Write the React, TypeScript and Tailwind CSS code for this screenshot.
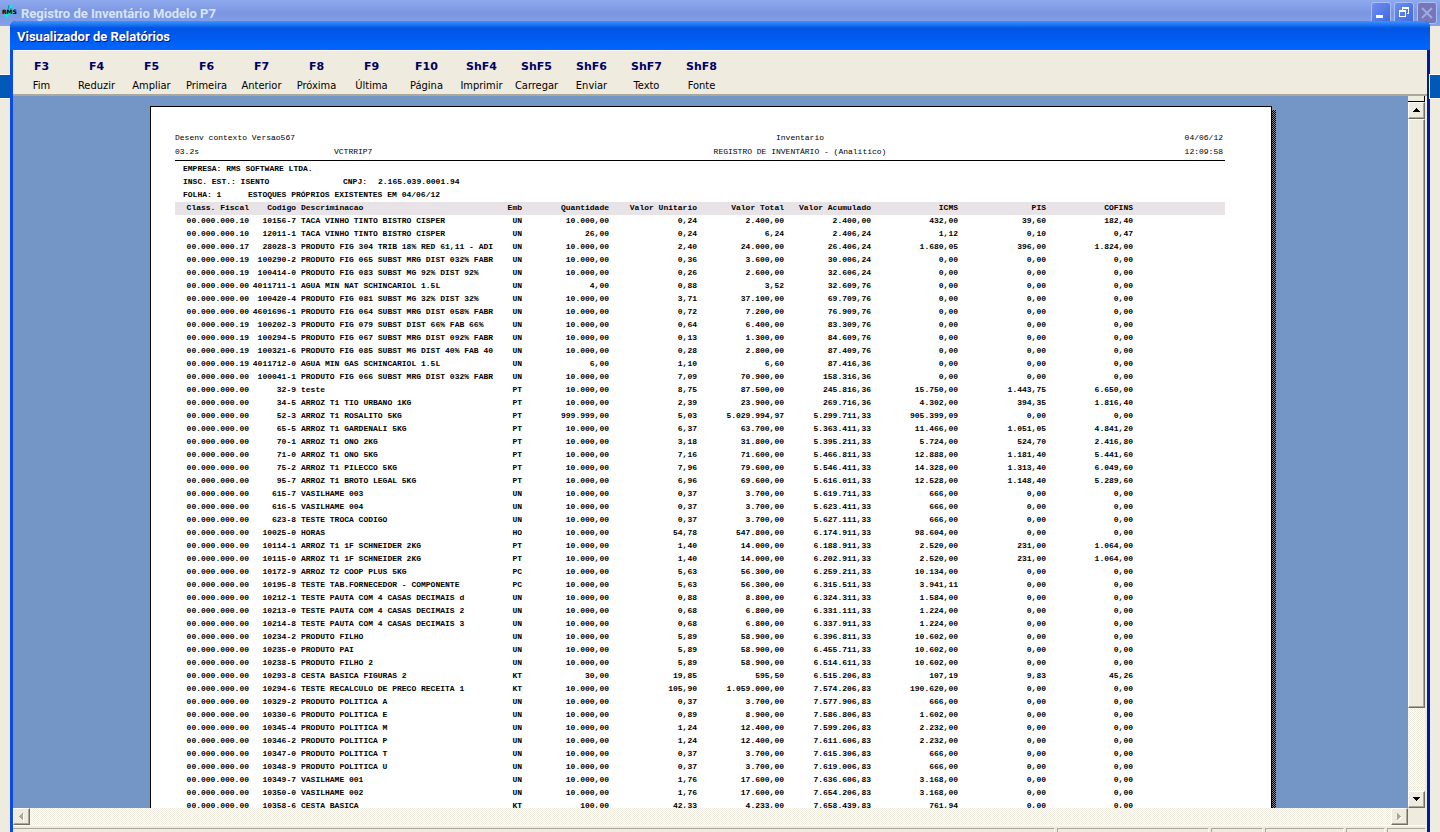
import clsx from "clsx";

const commands = [
  { key: "F3", label: "Fim" },
  { key: "F4", label: "Reduzir" },
  { key: "F5", label: "Ampliar" },
  { key: "F6", label: "Primeira" },
  { key: "F7", label: "Anterior" },
  { key: "F8", label: "Próxima" },
  { key: "F9", label: "Última" },
  { key: "F10", label: "Página" },
  { key: "ShF4", label: "Imprimir" },
  { key: "ShF5", label: "Carregar" },
  { key: "ShF6", label: "Enviar" },
  { key: "ShF7", label: "Texto" },
  { key: "ShF8", label: "Fonte" },
];

const columns = [
  "Class. Fiscal", "Codigo", "Descriminacao", "Emb", "Quantidade", "Valor Unitario",
  "Valor Total", "Valor Acumulado", "ICMS", "PIS", "COFINS",
];

// class | code | description | unit | qty | unit price | total | running total | icms | pis | cofins
const rows = `
00.000.000.10|10156-7|TACA VINHO TINTO BISTRO CISPER|UN|10.000,00|0,24|2.400,00|2.400,00|432,00|39,60|182,40
00.000.000.10|12011-1|TACA VINHO TINTO BISTRO CISPER|UN|26,00|0,24|6,24|2.406,24|1,12|0,10|0,47
00.000.000.17|28028-3|PRODUTO FIG 304 TRIB 18% RED 61,11 - ADI|UN|10.000,00|2,40|24.000,00|26.406,24|1.680,05|396,00|1.824,00
00.000.000.19|100290-2|PRODUTO FIG 065 SUBST MRG DIST 032% FABR|UN|10.000,00|0,36|3.600,00|30.006,24|0,00|0,00|0,00
00.000.000.19|100414-0|PRODUTO FIG 083 SUBST MG 92% DIST 92%|UN|10.000,00|0,26|2.600,00|32.606,24|0,00|0,00|0,00
00.000.000.00|4011711-1|AGUA MIN NAT SCHINCARIOL 1.5L|UN|4,00|0,88|3,52|32.609,76|0,00|0,00|0,00
00.000.000.00|100420-4|PRODUTO FIG 081 SUBST MG 32% DIST 32%|UN|10.000,00|3,71|37.100,00|69.709,76|0,00|0,00|0,00
00.000.000.00|4601696-1|PRODUTO FIG 064 SUBST MRG DIST 058% FABR|UN|10.000,00|0,72|7.200,00|76.909,76|0,00|0,00|0,00
00.000.000.19|100202-3|PRODUTO FIG 079 SUBST DIST 66% FAB 66%|UN|10.000,00|0,64|6.400,00|83.309,76|0,00|0,00|0,00
00.000.000.19|100294-5|PRODUTO FIG 067 SUBST MRG DIST 092% FABR|UN|10.000,00|0,13|1.300,00|84.609,76|0,00|0,00|0,00
00.000.000.19|100321-6|PRODUTO FIG 085 SUBST MG DIST 40% FAB 40|UN|10.000,00|0,28|2.800,00|87.409,76|0,00|0,00|0,00
00.000.000.19|4011712-0|AGUA MIN GAS SCHINCARIOL 1.5L|UN|6,00|1,10|6,60|87.416,36|0,00|0,00|0,00
00.000.000.00|100041-1|PRODUTO FIG 066 SUBST MRG DIST 032% FABR|UN|10.000,00|7,09|70.900,00|158.316,36|0,00|0,00|0,00
00.000.000.00|32-9|teste|PT|10.000,00|8,75|87.500,00|245.816,36|15.750,00|1.443,75|6.650,00
00.000.000.00|34-5|ARROZ T1 TIO URBANO 1KG|PT|10.000,00|2,39|23.900,00|269.716,36|4.302,00|394,35|1.816,40
00.000.000.00|52-3|ARROZ T1 ROSALITO 5KG|PT|999.999,00|5,03|5.029.994,97|5.299.711,33|905.399,09|0,00|0,00
00.000.000.00|65-5|ARROZ T1 GARDENALI 5KG|PT|10.000,00|6,37|63.700,00|5.363.411,33|11.466,00|1.051,05|4.841,20
00.000.000.00|70-1|ARROZ T1 ONO 2KG|PT|10.000,00|3,18|31.800,00|5.395.211,33|5.724,00|524,70|2.416,80
00.000.000.00|71-0|ARROZ T1 ONO 5KG|PT|10.000,00|7,16|71.600,00|5.466.811,33|12.888,00|1.181,40|5.441,60
00.000.000.00|75-2|ARROZ T1 PILECCO 5KG|PT|10.000,00|7,96|79.600,00|5.546.411,33|14.328,00|1.313,40|6.049,60
00.000.000.00|95-7|ARROZ T1 BROTO LEGAL 5KG|PT|10.000,00|6,96|69.600,00|5.616.011,33|12.528,00|1.148,40|5.289,60
00.000.000.00|615-7|VASILHAME 003|UN|10.000,00|0,37|3.700,00|5.619.711,33|666,00|0,00|0,00
00.000.000.00|616-5|VASILHAME 004|UN|10.000,00|0,37|3.700,00|5.623.411,33|666,00|0,00|0,00
00.000.000.00|623-8|TESTE TROCA CODIGO|UN|10.000,00|0,37|3.700,00|5.627.111,33|666,00|0,00|0,00
00.000.000.00|10025-0|HORAS|HO|10.000,00|54,78|547.800,00|6.174.911,33|98.604,00|0,00|0,00
00.000.000.00|10114-1|ARROZ T1 1F SCHNEIDER 2KG|PT|10.000,00|1,40|14.000,00|6.188.911,33|2.520,00|231,00|1.064,00
00.000.000.00|10115-0|ARROZ T1 1F SCHNEIDER 2KG|PT|10.000,00|1,40|14.000,00|6.202.911,33|2.520,00|231,00|1.064,00
00.000.000.00|10172-9|ARROZ T2 COOP PLUS 5KG|PC|10.000,00|5,63|56.300,00|6.259.211,33|10.134,00|0,00|0,00
00.000.000.00|10195-8|TESTE TAB.FORNECEDOR - COMPONENTE|PC|10.000,00|5,63|56.300,00|6.315.511,33|3.941,11|0,00|0,00
00.000.000.00|10212-1|TESTE PAUTA COM 4 CASAS DECIMAIS d|UN|10.000,00|0,88|8.800,00|6.324.311,33|1.584,00|0,00|0,00
00.000.000.00|10213-0|TESTE PAUTA COM 4 CASAS DECIMAIS 2|UN|10.000,00|0,68|6.800,00|6.331.111,33|1.224,00|0,00|0,00
00.000.000.00|10214-8|TESTE PAUTA COM 4 CASAS DECIMAIS 3|UN|10.000,00|0,68|6.800,00|6.337.911,33|1.224,00|0,00|0,00
00.000.000.00|10234-2|PRODUTO FILHO|UN|10.000,00|5,89|58.900,00|6.396.811,33|10.602,00|0,00|0,00
00.000.000.00|10235-0|PRODUTO PAI|UN|10.000,00|5,89|58.900,00|6.455.711,33|10.602,00|0,00|0,00
00.000.000.00|10238-5|PRODUTO FILHO 2|UN|10.000,00|5,89|58.900,00|6.514.611,33|10.602,00|0,00|0,00
00.000.000.00|10293-8|CESTA BASICA FIGURAS 2|KT|30,00|19,85|595,50|6.515.206,83|107,19|9,83|45,26
00.000.000.00|10294-6|TESTE RECALCULO DE PRECO RECEITA 1|KT|10.000,00|105,90|1.059.000,00|7.574.206,83|190.620,00|0,00|0,00
00.000.000.00|10329-2|PRODUTO POLITICA A|UN|10.000,00|0,37|3.700,00|7.577.906,83|666,00|0,00|0,00
00.000.000.00|10330-6|PRODUTO POLITICA E|UN|10.000,00|0,89|8.900,00|7.586.806,83|1.602,00|0,00|0,00
00.000.000.00|10345-4|PRODUTO POLITICA M|UN|10.000,00|1,24|12.400,00|7.599.206,83|2.232,00|0,00|0,00
00.000.000.00|10346-2|PRODUTO POLITICA P|UN|10.000,00|1,24|12.400,00|7.611.606,83|2.232,00|0,00|0,00
00.000.000.00|10347-0|PRODUTO POLITICA T|UN|10.000,00|0,37|3.700,00|7.615.306,83|666,00|0,00|0,00
00.000.000.00|10348-9|PRODUTO POLITICA U|UN|10.000,00|0,37|3.700,00|7.619.006,83|666,00|0,00|0,00
00.000.000.00|10349-7|VASILHAME 001|UN|10.000,00|1,76|17.600,00|7.636.606,83|3.168,00|0,00|0,00
00.000.000.00|10350-0|VASILHAME 002|UN|10.000,00|1,76|17.600,00|7.654.206,83|3.168,00|0,00|0,00
00.000.000.00|10358-6|CESTA BASICA|KT|100,00|42,33|4.233,00|7.658.439,83|761,94|0,00|0,00
`.trim().split("\n").map((line) => line.split("|"));

const bevel = "bg-[#efebde] border border-t-white border-l-white border-r-[#716f64] border-b-[#716f64] shadow-[inset_-1px_-1px_0_#aca899]";
const track = "bg-[repeating-conic-gradient(#ffffff_0_25%,#efebde_0_50%)] bg-[length:2px_2px]";

function ArrowButton({ dir, disabled }: { dir: "up" | "down" | "left" | "right"; disabled?: boolean }) {
  const paths = {
    up: "M3 0h1v1h1v1h1v1h1v1H0V3h1V2h1V1h1z",
    down: "M0 0h7v1H6v1H5v1H4v1H3V3H2V2H1V1H0z",
    left: "M0 3h1V2h1V1h1V0h1v7H3V6H2V5H1V4H0z",
    right: "M0 0h1v1h1v1h1v1h1v1H3v1H2v1H1v1H0z",
  };
  return (
    <button type="button" disabled={disabled} aria-label={dir} className={clsx("flex size-[17px] shrink-0 items-center justify-center", bevel)}>
      <svg width="9" height="9" viewBox="0 0 9 9" shapeRendering="crispEdges">
        <g transform={dir === "up" || dir === "down" ? "translate(1 2)" : "translate(2 1)"}>
          {disabled && <path d={paths[dir]} fill="#fff" transform="translate(1 1)" />}
          <path d={paths[dir]} fill={disabled ? "#aca899" : "#000"} />
        </g>
      </svg>
    </button>
  );
}

function MainTitleBar() {
  const btn = "h-[22px] w-5 rounded-[3px] border border-[#a9c0f5] flex justify-center";
  return (
    <header className="flex h-[26px] shrink-0 items-start bg-linear-to-b from-[#8fa9ee] via-[#7b96e0] to-[#84a2e8] pr-[3px] pl-[2px]">
      <svg width="16" height="16" viewBox="0 0 16 16" className="mt-[4px] shrink-0">
        <path d="M2 13l2-5 3-4 2-4 2 1-1 4 2 0-2 5-3 1-2 4-1-3z" fill="#14e4dc" />
        <path d="M7 1L6 6 4 9M9 4l-1 4" fill="none" stroke="#0a8f9a" />
        <text x="0" y="10" fontSize="6" fontWeight="bold" fontFamily="DejaVu Sans" fill="#000">RMS</text>
      </svg>
      <h1 className="ml-[3px] flex-1 pt-[5px] font-['Roboto','sans-serif'] text-[13px] leading-[18px] font-bold text-[#d8e4f8]">
        Registro de Inventário Modelo P7
      </h1>
      <div className="flex gap-[3px] pt-[2px]">
        <button type="button" aria-label="Minimizar" className={clsx(btn, "bg-linear-to-br from-[#6f8ff0] to-[#3f66dd]")}>
          <svg width="18" height="18" shapeRendering="crispEdges"><path d="M4 12h7v3H4z" fill="#fff" /></svg>
        </button>
        <button type="button" aria-label="Restaurar" className={clsx(btn, "bg-linear-to-br from-[#6f8ff0] to-[#3f66dd]")}>
          <svg width="18" height="18" shapeRendering="crispEdges" fill="#fff">
            <path fillRule="evenodd" d="M7 4h7v7h-2v-1h1V6H8v1H7zM4 7h7v7H4zM5 9v4h5V9z" />
          </svg>
        </button>
        <button type="button" aria-label="Fechar" disabled className={clsx(btn, "border-[#8f95cc] bg-[#7577b8]")}>
          <svg width="18" height="18" stroke="#a5a8e0" strokeWidth="2"><path d="M4 5l10 10M14 5L4 15" /></svg>
        </button>
      </div>
    </header>
  );
}

function Toolbar() {
  return (
    <nav className="flex h-[46px] shrink-0 border-t border-b-2 border-t-white border-b-[#aca899] bg-[#efebde] pl-px">
      {commands.map((c) => (
        <button key={c.key} type="button" className="flex w-[55px] shrink-0 flex-col items-center pt-2 whitespace-nowrap">
          <span className="font-['DejaVu_Sans','sans-serif'] text-[11px] leading-4 font-bold text-[#000063]">{c.key}</span>
          <span className="mt-[3px] font-['DejaVu_Sans_Condensed','sans-serif'] text-[11px] leading-4 text-black">{c.label}</span>
        </button>
      ))}
    </nav>
  );
}

function ReportTable() {
  return (
    <table className="w-full table-fixed border-collapse text-right font-bold whitespace-nowrap">
      <colgroup>
        <col className="w-[74px]" />
        <col className="w-[47px]" />
        <col className="w-[205px]" />
        <col className="w-[21px]" />
        <col className="w-[87px]" />
        <col className="w-[88px]" />
        <col className="w-[87px]" />
        <col className="w-[87px]" />
        <col className="w-[87px]" />
        <col className="w-[88px]" />
        <col className="w-[87px]" />
        <col />
      </colgroup>
      <thead>
        <tr className="h-[13px] bg-[#e7e3e7]">
          {columns.map((c, i) => (
            <th key={c} scope="col" className={clsx("p-0 align-top leading-[11px]", i === 2 && "pl-[5px] text-left")}>{c}</th>
          ))}
          <td />
        </tr>
      </thead>
      <tbody>
        {rows.map((row) => (
          <tr key={row[1]} className="h-[13px]">
            {row.map((cell, i) => (
              <td key={i} className={clsx("p-0 align-top leading-[11px]", i === 2 && "pl-[5px] text-left")}>{cell}</td>
            ))}
            <td />
          </tr>
        ))}
      </tbody>
    </table>
  );
}

function ReportPage() {
  return (
    <div className="mt-[10px] mr-[132px] ml-[137px] flex min-w-0 flex-1">
      <article className="min-w-0 flex-1 border border-b-0 border-black bg-white pt-6 pr-[46px] pl-6 font-['Liberation_Mono','monospace'] text-[8px] text-black">
        <div className="grid grid-cols-[159px_141px_1fr_100px] border-b border-black pb-px leading-[14px] whitespace-nowrap">
          <span className="col-span-2">Desenv contexto Versao567</span>
          <span className="text-center">Inventario</span>
          <span className="pr-[2px] text-right">04/06/12</span>
          <span>03.2s</span>
          <span>VCTRRIP7</span>
          <span className="text-center">REGISTRO DE INVENTÁRIO - (Analítico)</span>
          <span className="pr-[2px] text-right">12:09:58</span>
        </div>
        <div className="pt-px pb-px pl-2 leading-[13px] font-bold whitespace-nowrap">
          <p>EMPRESA: RMS SOFTWARE LTDA.</p>
          <p className="flex">
            <span className="w-[160px]">INSC. EST.: ISENTO</span>
            <span className="w-[35px]">CNPJ:</span>
            <span>2.165.039.0001.94</span>
          </p>
          <p className="flex">
            <span className="w-[65px]">FOLHA: 1</span>
            <span>ESTOQUES PRÓPRIOS EXISTENTES EM 04/06/12</span>
          </p>
        </div>
        <ReportTable />
      </article>
      <div className="mt-1 w-1 bg-[repeating-conic-gradient(#000000_0_25%,#848284_0_50%)] bg-[length:2px_2px]" />
    </div>
  );
}

function Viewer() {
  return (
    <section className="-mt-[5px] flex min-w-0 flex-1 flex-col overflow-hidden rounded-t-[6px] bg-[#0831d9]">
      <h2 className="flex h-[29px] shrink-0 items-center bg-linear-to-b from-[#3a93ff] via-[#0054e3] via-25% to-[#0066ff] px-[7px] pt-[3px] font-['Roboto','sans-serif'] text-[13px] font-bold text-white [text-shadow:1px_1px_0_#00138c]">
        Visualizador de Relatórios
      </h2>
      <div className="flex min-h-0 flex-1 flex-col border-x-[3px] border-l-[#0a4be8] border-r-[#0018a8] bg-[#efebde]">
        <Toolbar />
        <div className="flex min-h-0 flex-1 pr-[2px]">
          <div className="flex min-w-0 flex-1 overflow-hidden bg-[#7396c6]">
            <ReportPage />
          </div>
          <div className={clsx("flex w-[17px] shrink-0 flex-col", track)}>
            <div className="h-[6px] shrink-0 border-r border-b border-black bg-[#efebde]" />
            <ArrowButton dir="up" />
            <div className={clsx("flex-[589]", bevel)} />
            <div className="flex-[83]" />
            <ArrowButton dir="down" />
          </div>
        </div>
        <div className="flex h-[17px] shrink-0 pr-[19px]">
          <ArrowButton dir="left" disabled />
          <div className={clsx("flex-1", track)} />
          <ArrowButton dir="right" disabled />
        </div>
        <footer className="flex h-[7px] shrink-0 gap-[2px] border-t border-white pt-[2px] pr-[2px]">
          <div className="flex-1 border-t border-r border-t-[#aca899] border-r-white" />
          <div className="w-[152px] border-t border-x border-x-[#aca899] border-t-[#aca899] border-r-white" />
          <div className="w-[52px] border-t border-x border-x-[#aca899] border-t-[#aca899] border-r-white" />
          <div className="w-[79px] border-t border-x border-x-[#aca899] border-t-[#aca899] border-r-white" />
          <div className="w-[39px] border-t border-x border-x-[#aca899] border-t-[#aca899] border-r-white" />
          <div className="w-[38px] border-t border-l border-[#aca899]" />
        </footer>
      </div>
    </section>
  );
}

function EdgeStrip() {
  return (
    <div className="w-[10px] shrink-0 pt-[49px]">
      <div className="h-[23px] bg-[#005ab5] outline outline-white" />
    </div>
  );
}

export default function App() {
  return (
    <div className="flex h-screen flex-col overflow-hidden bg-[#efebde]">
      <MainTitleBar />
      <main className="flex min-h-0 flex-1">
        <EdgeStrip />
        <Viewer />
        <EdgeStrip />
      </main>
    </div>
  );
}
